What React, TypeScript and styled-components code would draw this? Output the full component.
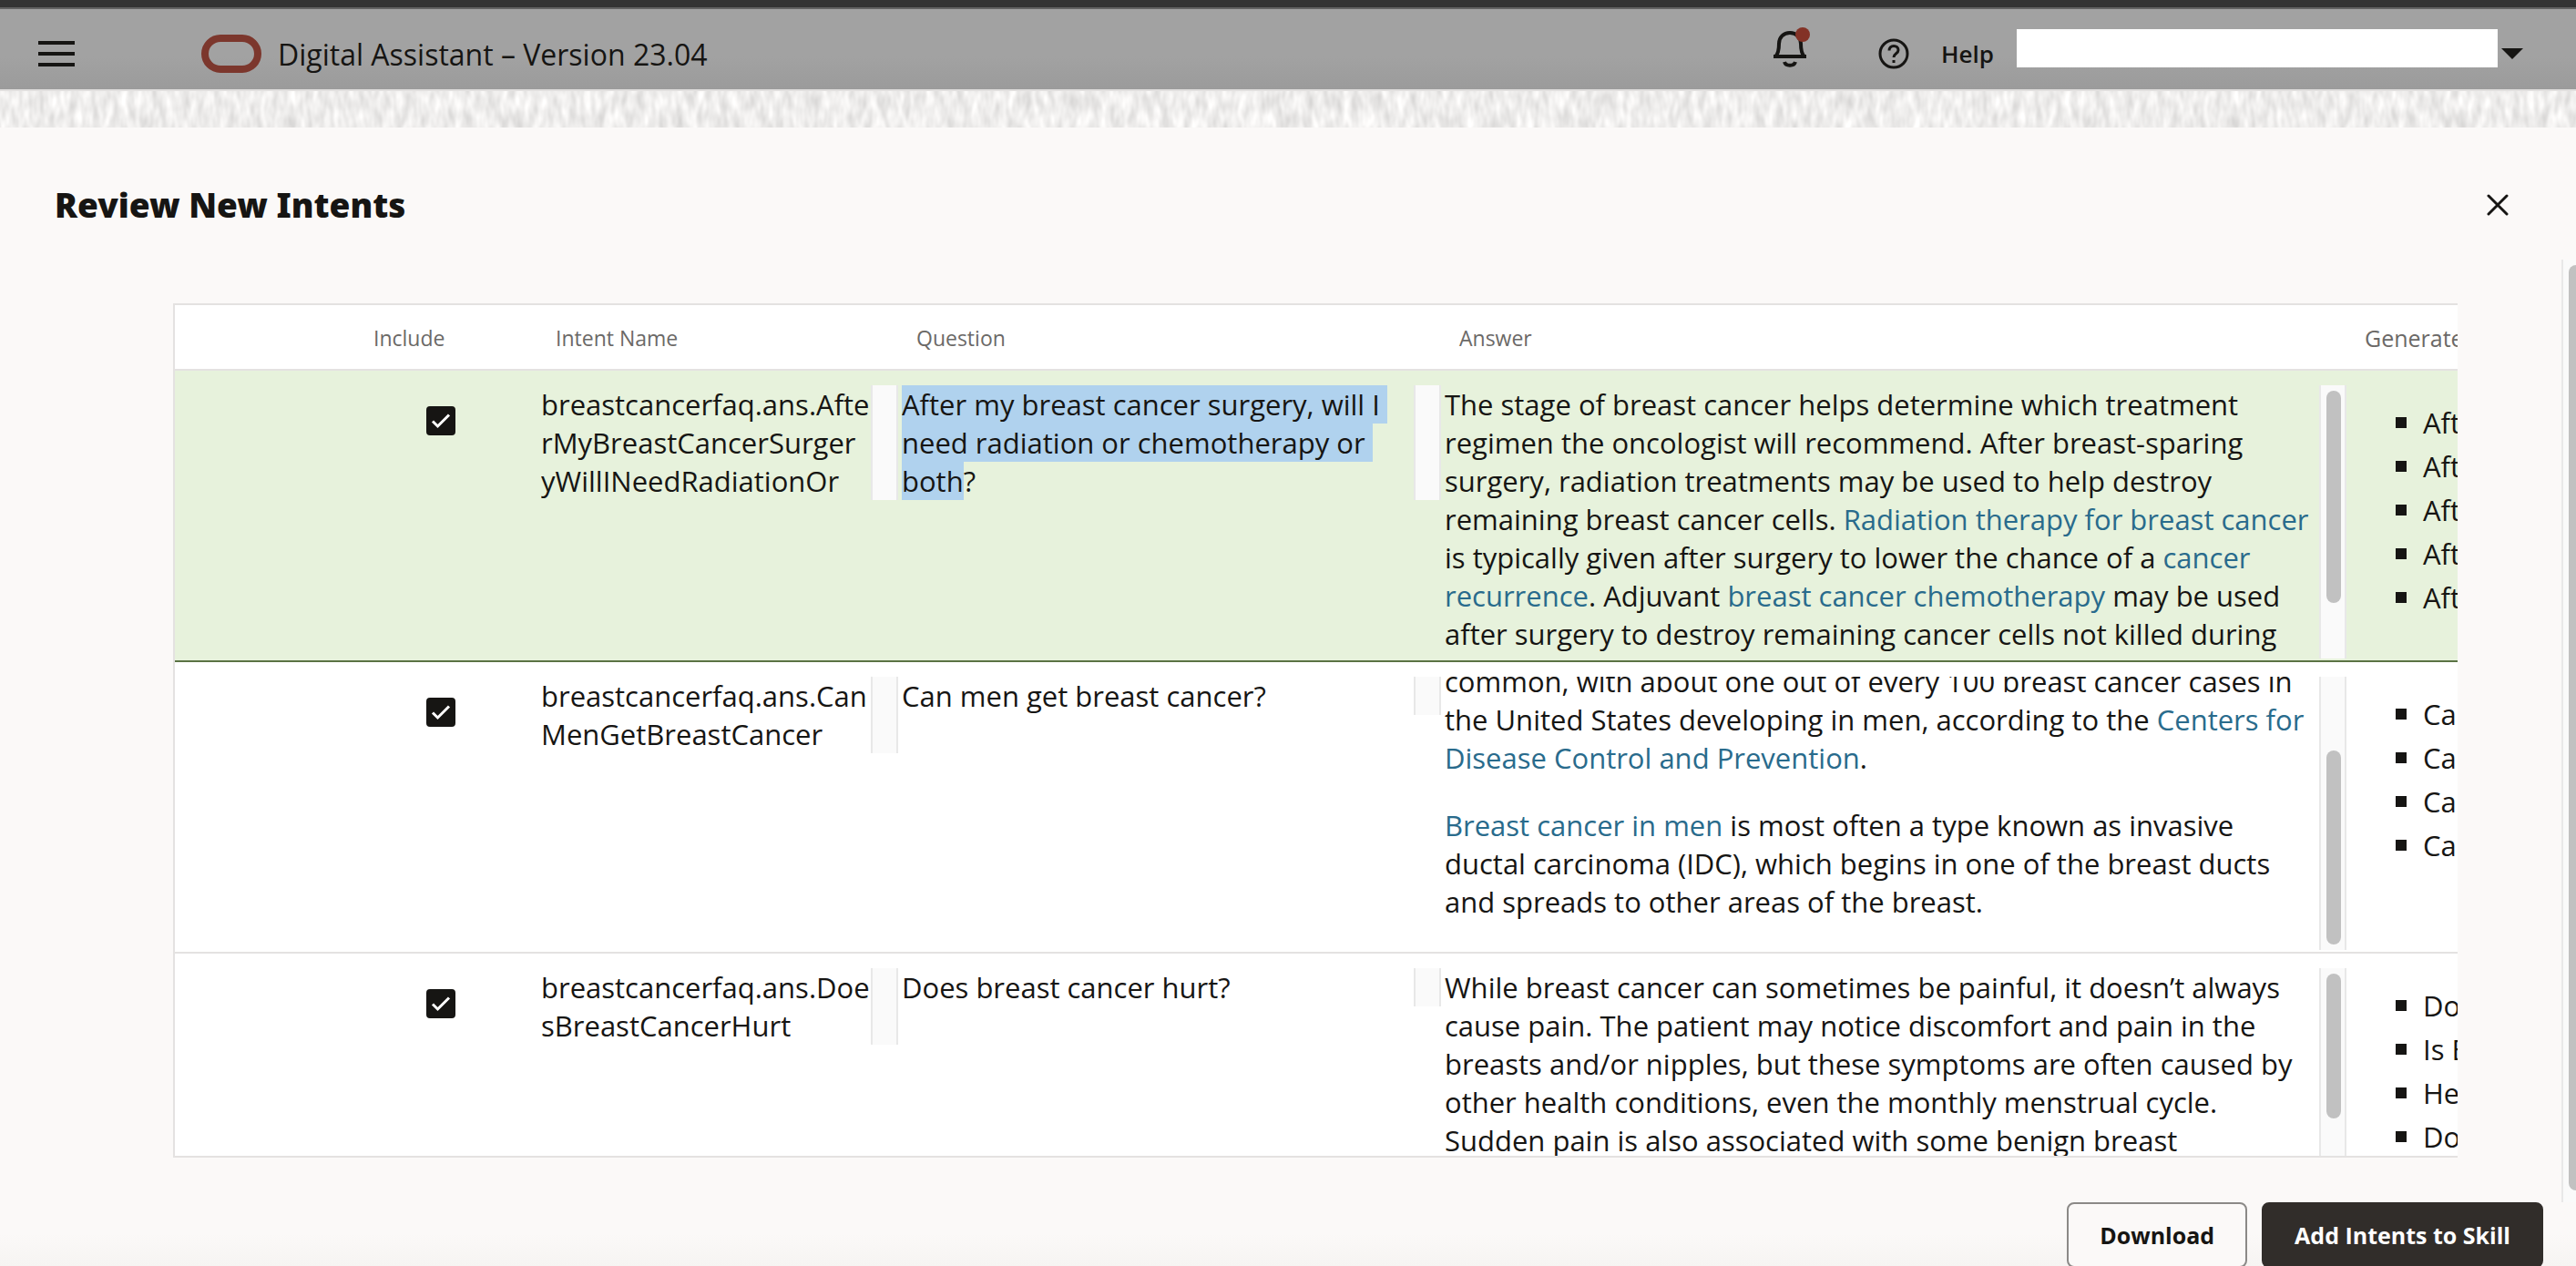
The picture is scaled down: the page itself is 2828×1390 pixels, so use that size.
import React, { useState } from "react";
import styled, { createGlobalStyle } from "styled-components";

const ink = "#161513";
const line = "#e4e2e1";
const sans = `"Open Sans", "Noto Sans", sans-serif`;

const GlobalStyle = createGlobalStyle`
  *, *::before, *::after { box-sizing: border-box; }
  body { margin: 0; background: #fbf9f8; }
  button { font: inherit; color: inherit; background: none; border: 0; padding: 0; cursor: pointer; }
`;

const Page = styled.div`
  height: 100vh;
  display: flex;
  flex-direction: column;
  overflow: hidden;
  background: #fbf9f8;
  color: ${ink};
  font-family: ${sans};
  font-size: 31px;
  line-height: 42px;
`;

/* ---------- application header ---------- */

const Header = styled.header`
  flex: none;
  height: 98px;
  padding: 12px 58px 0 42px;
  border-top: 8px solid #343434;
  box-shadow: inset 0 2px 0 #636363;
  background: linear-gradient(#a2a2a2 60%, #9b9b9b);
  display: flex;
  align-items: center;
`;

const MenuButton = styled.button`
  width: 40px;
  height: 28px;
  display: flex;
  flex-direction: column;
  justify-content: space-between;
`;

const MenuBar = styled.span`
  height: 4px;
  background: ${ink};
`;

const Logo = styled.svg`
  width: 66px;
  height: 42px;
  margin: 0 18px 0 139px;
`;

const ProductName = styled.span`
  padding-top: 2px;
  font-size: 32px;
`;

const HeaderTools = styled.div`
  margin-left: auto;
  display: flex;
  align-items: center;
`;

const IconButton = styled.button`
  display: flex;
  margin-right: 70px;
`;

const HelpButton = styled.button`
  display: flex;
  align-items: center;
  gap: 34px;
  margin-right: 25px;
  font-size: 26px;
  font-weight: 600;
`;

const AccountButton = styled.button`
  display: flex;
  align-items: center;
  gap: 4px;
`;

const AccountName = styled.span`
  width: 528px;
  height: 42px;
  margin-bottom: 12px;
  background: #fff;
`;

/* ---------- dialog ---------- */

const Dialog = styled.section`
  flex: 1;
  min-height: 0;
  display: flex;
  flex-direction: column;
`;

const Texture = styled.svg`
  flex: none;
  display: block;
  width: 100%;
  height: 42px;
  border-top: 2px solid #e1dfde;
`;

const TitleBar = styled.div`
  flex: none;
  height: 145px;
  padding: 24px 74px 0 60px;
  display: flex;
  align-items: center;
  justify-content: space-between;
`;

const Title = styled.h1`
  margin: 0;
  font: 900 37px/52px "Noto Sans", sans-serif;
`;

const CloseButton = styled.button`
  display: flex;
`;

const Body = styled.div`
  flex: 1;
  min-height: 0;
  display: flex;
`;

const Content = styled.div`
  flex: 1;
  min-width: 0;
  padding: 48px 114px 49px 190px;
  display: flex;
`;

const PageTrack = styled.div`
  flex: none;
  width: 16px;
  padding: 6px 0 13px 6px;
  border-left: 2px solid #e8e8e8;
  background: #fafafa;
  display: flex;
  overflow: hidden;
`;

const PageThumb = styled.div`
  flex: none;
  width: 16px;
  border-radius: 8px;
  background: #c1c1c1;
`;

const Panel = styled.div`
  flex: 1;
  min-width: 0;
  overflow: hidden;
  border: 2px solid ${line};
  border-right: 0;
  background: #fff;
`;

/* ---------- intents table ---------- */

const Table = styled.table`
  width: 2788px;
  table-layout: fixed;
  border-collapse: separate;
  border-spacing: 0;
`;

const Col = styled.col<{ $width: number }>`
  width: ${(p) => p.$width}px;
`;

const HeadCell = styled.th<{ $large?: boolean }>`
  height: 72px;
  padding: 2px 16px 0;
  border-bottom: 2px solid ${line};
  color: #6b6967;
  font-size: ${(p) => (p.$large ? 25 : 23)}px;
  font-weight: 400;
  line-height: 32px;
  text-align: left;
`;

const Row = styled.tr<{ $selected?: boolean }>`
  background: ${(p) => (p.$selected ? "#e7f2dc" : "#fff")};
  > td {
    border-bottom: 2px solid ${(p) => (p.$selected ? "#5b7344" : line)};
  }
`;

const DataCell = styled.td`
  height: 320px;
  padding: 16px 0 0;
  vertical-align: top;
`;

const CheckLabel = styled.label`
  display: grid;
  width: 32px;
  height: 32px;
  margin: 23px 0 0 74px;
  > * {
    grid-area: 1 / 1;
  }
`;

const CheckInput = styled.input`
  appearance: none;
  width: 32px;
  height: 32px;
  margin: 0;
  border: 2px solid ${ink};
  border-radius: 4px;
  background: transparent;
  &:checked {
    background: ${ink};
  }
  &:not(:checked) + svg {
    visibility: hidden;
  }
`;

const CheckMark = styled.svg`
  pointer-events: none;
`;

const CellBox = styled.div<{ $height?: number }>`
  display: flex;
  margin-right: 4px;
  height: ${(p) => (p.$height ? `${p.$height}px` : "auto")};
`;

const CellText = styled.div<{ $toEnd?: boolean }>`
  flex: 1;
  min-width: 0;
  overflow: hidden;
  display: flex;
  flex-direction: column;
  justify-content: ${(p) => (p.$toEnd ? "flex-end" : "flex-start")};
`;

const Paragraph = styled.p`
  flex: none;
  margin: 0 0 32px;
`;

const Track = styled.div`
  flex: none;
  width: 30px;
  padding: 0 6px;
  border: solid #e8e8e8;
  border-width: 0 2px;
  background: #fafafa;
`;

const Thumb = styled.div<{ $top: number; $height: number }>`
  width: 16px;
  margin: ${(p) => p.$top}px -2px 0 0;
  height: ${(p) => p.$height}px;
  border-radius: 8px;
  background: #c1c1c1;
`;

const TrackWithThumb = styled(Track)`
  display: flex;
`;

const Highlight = styled.mark`
  background: #b0d2ee;
  color: inherit;
`;

const Link = styled.a`
  color: #296b8c;
  text-decoration: none;
`;

const Utterances = styled.ul`
  margin: 17px 0 0;
  padding: 0 0 0 50px;
  list-style: none;
  white-space: nowrap;
`;

const Utterance = styled.li`
  display: flex;
  align-items: center;
  gap: 18px;
  line-height: 48px;
  &::before {
    content: "";
    width: 12px;
    height: 12px;
    background: ${ink};
  }
`;

/* ---------- footer ---------- */

const Footer = styled.footer`
  flex: none;
  height: 70px;
  padding-right: 36px;
  display: flex;
  align-items: flex-start;
  justify-content: flex-end;
  gap: 16px;
  background: linear-gradient(#fbf9f8 50%, #f6f4f2);
`;

const FooterButton = styled.button<{ $primary?: boolean }>`
  && {
    height: 72px;
    padding: 0 34px;
    border: 2px solid ${(p) => (p.$primary ? "#312d2a" : "#8b8987")};
    border-radius: 8px;
    background: ${(p) => (p.$primary ? "#312d2a" : "#fbf9f8")};
    color: ${(p) => (p.$primary ? "#fff" : ink)};
    font-size: 25px;
    font-weight: 700;
    line-height: 34px;
  }
`;

type Intent = {
  name: string[];
  question: React.ReactNode;
  answer: React.ReactNode;
  toEnd?: boolean;
  thumb: { top: number; height: number };
  utterances: string[];
  selected?: boolean;
};

const intents: Intent[] = [
  {
    name: ["breastcancerfaq.ans.Afte", "rMyBreastCancerSurger", "yWillINeedRadiationOr"],
    question: (
      <>
        <Highlight>After my breast cancer surgery, will I{"\u00a0"} need radiation or chemotherapy or{"\u00a0"} both</Highlight>?
      </>
    ),
    answer: (
      <Paragraph>
        The stage of breast cancer helps determine which treatment regimen the oncologist will recommend. After
        breast-sparing surgery, radiation treatments may be used to help destroy remaining breast cancer cells.{" "}
        <Link href="#radiation">Radiation therapy for breast cancer</Link> is typically given after surgery to lower
        the chance of a <Link href="#recurrence">cancer recurrence</Link>. Adjuvant{" "}
        <Link href="#chemotherapy">breast cancer chemotherapy</Link> may be used after surgery to destroy remaining
        cancer cells not killed during
      </Paragraph>
    ),
    thumb: { top: 6, height: 233 },
    utterances: ["After", "After", "After", "After", "After"],
    selected: true,
  },
  {
    name: ["breastcancerfaq.ans.Can", "MenGetBreastCancer"],
    question: "Can men get breast cancer?",
    answer: (
      <>
        <Paragraph>
          common, with about one out of every 100 breast cancer cases in the United States developing in men,
          according to the <Link href="#cdc">Centers for Disease Control and Prevention</Link>.
        </Paragraph>
        <Paragraph>
          <Link href="#men">Breast cancer in men</Link> is most often a type known as invasive ductal carcinoma
          (IDC), which begins in one of the breast ducts and spreads to other areas of the breast.
        </Paragraph>
      </>
    ),
    toEnd: true,
    thumb: { top: 81, height: 213 },
    utterances: ["Can", "Can", "Can", "Can"],
  },
  {
    name: ["breastcancerfaq.ans.Doe", "sBreastCancerHurt"],
    question: "Does breast cancer hurt?",
    answer: (
      <Paragraph>
        While breast cancer can sometimes be painful, it doesn’t always cause pain. The patient may notice discomfort
        and pain in the breasts and/or nipples, but these symptoms are often caused by other health conditions, even
        the monthly menstrual cycle. Sudden pain is also associated with some benign breast
      </Paragraph>
    ),
    thumb: { top: 6, height: 159 },
    utterances: ["Does", "Is Breast", "Hello", "Does"],
  },
];

function IntentRow({ intent }: { intent: Intent }) {
  const [checked, setChecked] = useState(true);
  return (
    <Row $selected={intent.selected}>
      <DataCell />
      <DataCell>
        <CheckLabel>
          <CheckInput
            type="checkbox"
            aria-label={`Include ${intent.name.join("")}`}
            checked={checked}
            onChange={(e) => setChecked(e.target.checked)}
          />
          <CheckMark width="32" height="32" viewBox="0 0 32 32" fill="none" aria-hidden="true">
            <path d="M7 16.5 12.5 22 25 9.5" stroke="#fff" strokeWidth="3" />
          </CheckMark>
        </CheckLabel>
      </DataCell>
      <DataCell>
        <CellBox>
          <CellText>
            {intent.name.map((part) => (
              <span key={part}>{part}</span>
            ))}
          </CellText>
          <Track />
        </CellBox>
      </DataCell>
      <DataCell>
        <CellBox>
          <CellText>
            <span>{intent.question}</span>
          </CellText>
          <Track />
        </CellBox>
      </DataCell>
      <DataCell>
        <CellBox $height={300}>
          <CellText $toEnd={intent.toEnd}>{intent.answer}</CellText>
          <TrackWithThumb>
            <Thumb $top={intent.thumb.top} $height={intent.thumb.height} />
          </TrackWithThumb>
        </CellBox>
      </DataCell>
      <DataCell>
        <Utterances>
          {intent.utterances.map((text, i) => (
            <Utterance key={i}>{text}</Utterance>
          ))}
        </Utterances>
      </DataCell>
    </Row>
  );
}

export default function App() {
  return (
    <Page>
      <GlobalStyle />
      <Header>
        <MenuButton aria-label="Menu">
          <MenuBar />
          <MenuBar />
          <MenuBar />
        </MenuButton>
        <Logo viewBox="0 0 66 42" aria-hidden="true">
          <rect x="4" y="4" width="58" height="34" rx="17" fill="none" stroke="#7c372d" strokeWidth="8" />
        </Logo>
        <ProductName>Digital Assistant – Version 23.04</ProductName>
        <HeaderTools>
          <IconButton aria-label="Notifications">
            <svg width="48" height="60" viewBox="0 0 48 60" fill="none" aria-hidden="true">
              <g stroke={ink} strokeWidth="4">
                <path d="M6 35v-2c3.500-3 4-8 4-14C10 12 15 7 22 7s12 5 12 12c0 6 .5 11 4 14v2" />
                <path d="M4 33h36" />
                <path d="M16 39c1.500 5 10.500 5 12 0" />
              </g>
              <circle cx="36" cy="9" r="8" fill="#833226" />
            </svg>
          </IconButton>
          <HelpButton>
            <svg width="36" height="36" viewBox="0 0 36 36" fill="none" aria-hidden="true">
              <circle cx="18" cy="18" r="15" stroke={ink} strokeWidth="3" />
              <path d="M13 14.500c0-3 2-5 5-5s5 1.800 5 4.500c0 4-5 3.500-5 8" stroke={ink} strokeWidth="3" />
              <path d="M16.500 25h3v3h-3z" fill={ink} />
            </svg>
            Help
          </HelpButton>
          <AccountButton aria-label="Account menu">
            <AccountName />
            <svg width="24" height="12" viewBox="0 0 24 12" aria-hidden="true">
              <path d="M0 0h24L12 12z" fill={ink} />
            </svg>
          </AccountButton>
        </HeaderTools>
      </Header>

      <Dialog role="dialog" aria-labelledby="dialog-title">
        <Texture aria-hidden="true">
          <filter id="weave" x="0" y="0" width="100%" height="100%" colorInterpolationFilters="sRGB">
            <feTurbulence type="fractalNoise" baseFrequency="0.12 0.045" numOctaves="2" seed="7" />
            <feColorMatrix
              type="matrix"
              values="0.24 0 0 0 0.815  0.24 0 0 0 0.81  0.24 0 0 0 0.806  0 0 0 0 1"
            />
          </filter>
          <rect width="100%" height="100%" filter="url(#weave)" />
        </Texture>
        <TitleBar>
          <Title id="dialog-title">Review New Intents</Title>
          <CloseButton aria-label="Close">
            <svg width="24" height="24" viewBox="0 0 24 24" aria-hidden="true">
              <path d="M2 2l20 20M22 2L2 22" stroke={ink} strokeWidth="3" strokeLinecap="round" />
            </svg>
          </CloseButton>
        </TitleBar>
        <Body>
          <Content>
            <Panel>
              <Table>
                <colgroup>
                  <Col $width={202} />
                  <Col $width={200} />
                  <Col $width={396} />
                  <Col $width={596} />
                  <Col $width={994} />
                  <Col $width={400} />
                </colgroup>
                <thead>
                  <tr>
                    <HeadCell as="td" />
                    <HeadCell scope="col">Include</HeadCell>
                    <HeadCell scope="col">Intent Name</HeadCell>
                    <HeadCell scope="col">Question</HeadCell>
                    <HeadCell scope="col">Answer</HeadCell>
                    <HeadCell scope="col" $large>
                      Generated
                    </HeadCell>
                  </tr>
                </thead>
                <tbody>
                  {intents.map((intent) => (
                    <IntentRow key={intent.name.join("")} intent={intent} />
                  ))}
                </tbody>
              </Table>
            </Panel>
          </Content>
          <PageTrack>
            <PageThumb />
          </PageTrack>
        </Body>
        <Footer>
          <FooterButton>Download</FooterButton>
          <FooterButton $primary>Add Intents to Skill</FooterButton>
        </Footer>
      </Dialog>
    </Page>
  );
}
